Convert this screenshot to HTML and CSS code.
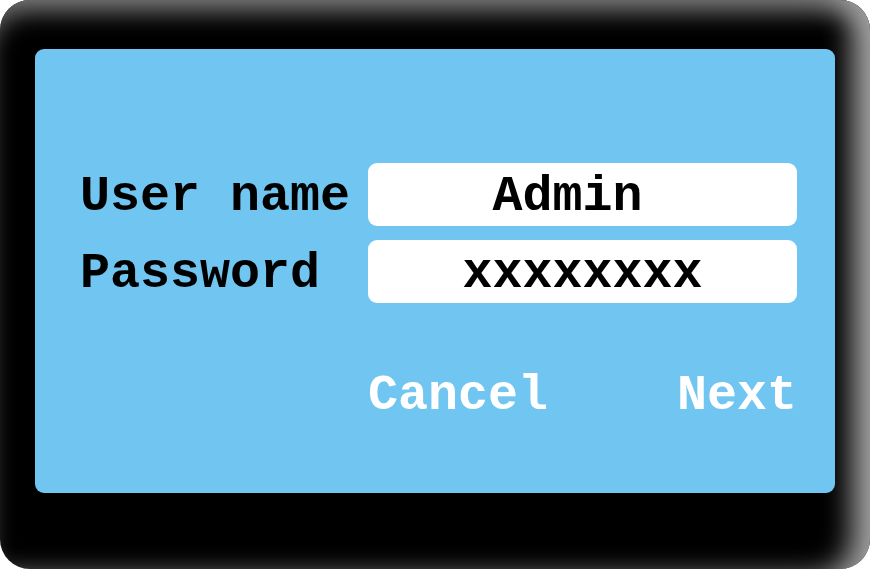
FILE: index.html
```html
<!DOCTYPE html>
<html lang="en">
<head>
    <meta charset="UTF-8">
    <title>Login Panel</title>
    <link rel="stylesheet" href="styles.css">
</head>
<body>
    <div class="device">
        <div class="screen">
            <div class="login-form">
                <div class="label">User name</div>
                <div class="field field-user">Admin</div>
                <div class="label">Password</div>
                <div class="field">xxxxxxxx</div>
            </div>
            <div class="actions">
                <button class="action">Cancel</button>
                <button class="action">Next</button>
            </div>
        </div>
    </div>
</body>
</html>
```

FILE: styles.css
```css
* {
    margin: 0;
    padding: 0;
    box-sizing: border-box;
}

body {
    background: #fff;
    font-family: 'Liberation Mono', 'Courier New', monospace;
}

.device {
    width: 870px;
    height: 569px;
    padding: 49px 35px 76px 35px;
    background: #000;
    border-radius: 30px;
    box-shadow:
        inset -26px 0 28px -8px #a0a0a0,
        inset 0 22px 22px -8px #5a5a5a;
}

.screen {
    width: 800px;
    height: 444px;
    background: #70c5f1;
    border-radius: 9px;
    padding: 114px 38px 0 45px;
}

.login-form {
    display: grid;
    grid-template-columns: 288px 429px;
    row-gap: 14px;
    align-items: center;
}

.label {
    font-size: 50px;
    font-weight: 700;
    color: #000;
    height: 63px;
    padding-top: 4px;
    line-height: 59px;
}

.field {
    height: 63px;
    padding-top: 4px;
    background: #fff;
    border-radius: 9px;
    font-size: 50px;
    font-weight: 700;
    color: #000;
    line-height: 59px;
    text-align: center;
}

.field-user {
    padding-right: 30px;
}

.actions {
    display: flex;
    justify-content: space-between;
    margin: 68px 0 0 288px;
}

.action {
    background: none;
    border: none;
    font-family: 'Liberation Mono', 'Courier New', monospace;
    font-size: 50px;
    font-weight: 700;
    line-height: 50px;
    color: #fff;
    cursor: pointer;
}
```
